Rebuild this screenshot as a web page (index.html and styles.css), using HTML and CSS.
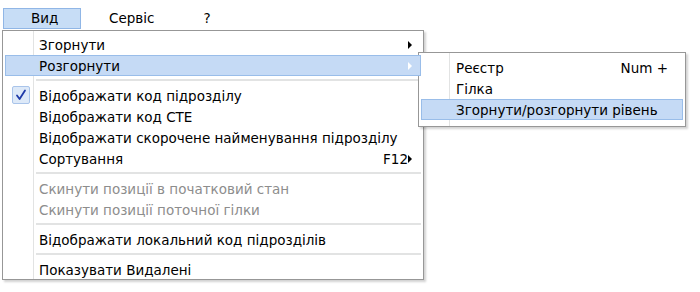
FILE: index.html
```html
<!DOCTYPE html>
<html>
<head>
<meta charset="utf-8">
<link rel="stylesheet" href="styles.css">
</head>
<body>
<div class="menubar">
  <div class="mb-item active">Вид</div>
  <div class="mb-item">Сервіс</div>
  <div class="mb-item q">?</div>
</div>

<div class="menu main">
  <div class="row"><span class="label">Згорнути</span><span class="arrow"></span></div>
  <div class="row hover"><span class="label">Розгорнути</span><span class="arrow white"></span></div>
  <div class="sep"></div>
  <div class="row"><span class="check"><svg width="18" height="18" viewBox="0 0 18 18"><path d="M5 9.5 L7.6 13 L13 4.5" fill="none" stroke="#1f3aa8" stroke-width="1.8" stroke-linecap="round" stroke-linejoin="round"/></svg></span><span class="label">Відображати код підрозділу</span></div>
  <div class="row"><span class="label">Відображати код СТЕ</span></div>
  <div class="row"><span class="label">Відображати скорочене найменування підрозділу</span></div>
  <div class="row"><span class="label">Сортування</span><span class="shortcut">F12</span><span class="arrow"></span></div>
  <div class="sep"></div>
  <div class="row disabled"><span class="label">Скинути позиції в початковий стан</span></div>
  <div class="row disabled"><span class="label">Скинути позиції поточної гілки</span></div>
  <div class="sep"></div>
  <div class="row"><span class="label">Відображати локальний код підрозділів</span></div>
  <div class="sep"></div>
  <div class="row"><span class="label">Показувати Видалені</span></div>
</div>

<div class="menu sub">
  <div class="row"><span class="label">Реєстр</span><span class="shortcut">Num +</span></div>
  <div class="row"><span class="label">Гілка</span></div>
  <div class="row hover"><span class="label">Згорнути/розгорнути рівень</span></div>
</div>
</body>
</html>
```
FILE: styles.css
```css
html, body {
  margin: 0;
  padding: 0;
  background: #ffffff;
}
body {
  width: 700px;
  height: 292px;
  position: relative;
  overflow: hidden;
  font-family: "DejaVu Sans", Verdana, sans-serif;
  font-size: 13.5px;
  color: #000;
}
.menubar {
  display: flex;
  padding: 8px 0 0 3px;
  height: 21px;
}
.mb-item {
  box-sizing: border-box;
  height: 21px;
  line-height: 19px;
  padding: 0 26px 0 27px;
  border: 1px solid transparent;
}
.mb-item.active {
  width: 78px;
  background: #c7ddf6;
  border-color: #90b6e6;
}
.mb-item.q {
  padding-left: 21px;
}
.menu {
  position: absolute;
  box-sizing: border-box;
  background: #ffffff;
  border: 1px solid #979797;
  box-shadow: 2px 2px 2px rgba(0,0,0,0.18);
}
.menu::before {
  content: "";
  position: absolute;
  top: 0;
  bottom: 0;
  left: 30px;
  width: 1px;
  background: #e2e3e3;
  border-right: 1px solid #ffffff;
}
.main {
  left: 2px;
  top: 30px;
  width: 422px;
  height: 250px;
  padding: 3px 2px 2px 2px;
}
.sub {
  left: 418px;
  top: 52px;
  width: 268px;
  height: 75px;
  padding: 4px 2px 2px 2px;
}
.row {
  position: relative;
  display: flex;
  align-items: center;
  height: 21px;
  box-sizing: border-box;
  border: 1px solid transparent;
  padding-left: 33px;
  padding-right: 12px;
  z-index: 1;
}
.main .row {
  padding-top: 1px;
}
.sub .row {
  padding-left: 34px;
  padding-right: 14px;
}
.row.hover {
  background: #c5daf5;
  border-color: #99bde9;
}
.label {
  flex: 1;
  white-space: nowrap;
}
.shortcut {
  white-space: nowrap;
}
.disabled {
  color: #8d8d8d;
}
.arrow {
  position: absolute;
  right: 8px;
  top: 6px;
  width: 0;
  height: 0;
  border-top: 4px solid transparent;
  border-bottom: 4px solid transparent;
  border-left: 4px solid #000;
}
.arrow.white {
  border-left-color: #ffffff;
}
.check {
  position: absolute;
  left: 6px;
  top: 0px;
  width: 18px;
  height: 18px;
  box-sizing: border-box;
  background: #dde9f8;
  border: 1px solid #a9c4ea;
  border-radius: 2px;
  display: flex;
}
.check svg {
  margin: -1px;
}
.sep {
  height: 2px;
  margin: 3px 0 3px 31px;
  background: #e2e3e3;
  border-bottom: 1px solid #ffffff;
}
```
